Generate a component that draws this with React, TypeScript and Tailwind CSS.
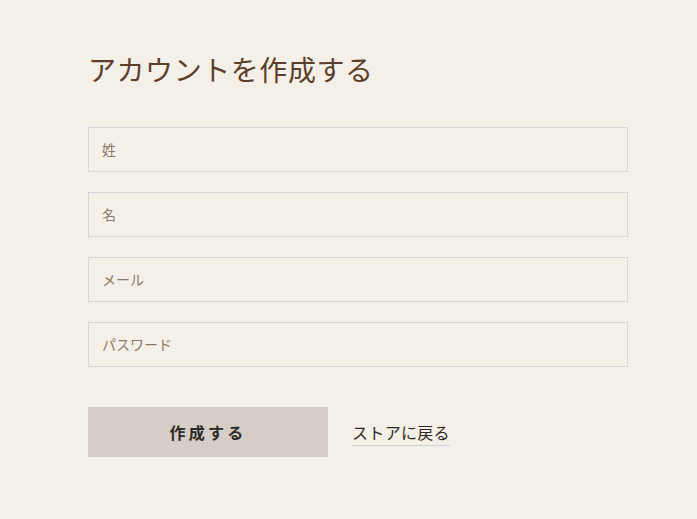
export default function App() {
  const fields = ['姓', '名', 'メール', 'パスワード'];
  return (
    <div className="min-h-[519px] w-full bg-[#f4f0e7] font-['Noto_Sans_CJK_JP',sans-serif]">
      <div className="w-[540px] ml-[88px] pt-[49px]">
        <h1 className="text-[28px] leading-[40px] text-[#5b3f2c] tracking-[0.02em]">アカウントを作成する</h1>
        <form className="mt-[38px] flex flex-col gap-5" onSubmit={(e) => e.preventDefault()}>
          {fields.map((f) => (
            <input
              key={f}
              type={f === 'パスワード' ? 'password' : 'text'}
              placeholder={f}
              className="h-[45px] w-full border border-[#d2d5db] bg-[#f4f0e7] px-[13px] pb-[2px] text-[14px] text-[#5b3f2c] placeholder:text-[#8a7a6d] outline-none"
            />
          ))}
          <div className="mt-5 flex items-center gap-6">
            <button
              type="submit"
              className="h-[50px] w-[240px] bg-[#d4cec6] text-[16px] font-bold tracking-[0.2em] text-[#2d2a27]"
            >
              作成する
            </button>
            <a href="#" className="mt-[3px] border-b border-[#ccd3e0] pb-[2px] text-[16px] leading-[22px] text-[#2d2a27] tracking-[0.02em]">
              ストアに戻る
            </a>
          </div>
        </form>
      </div>
    </div>
  );
}
